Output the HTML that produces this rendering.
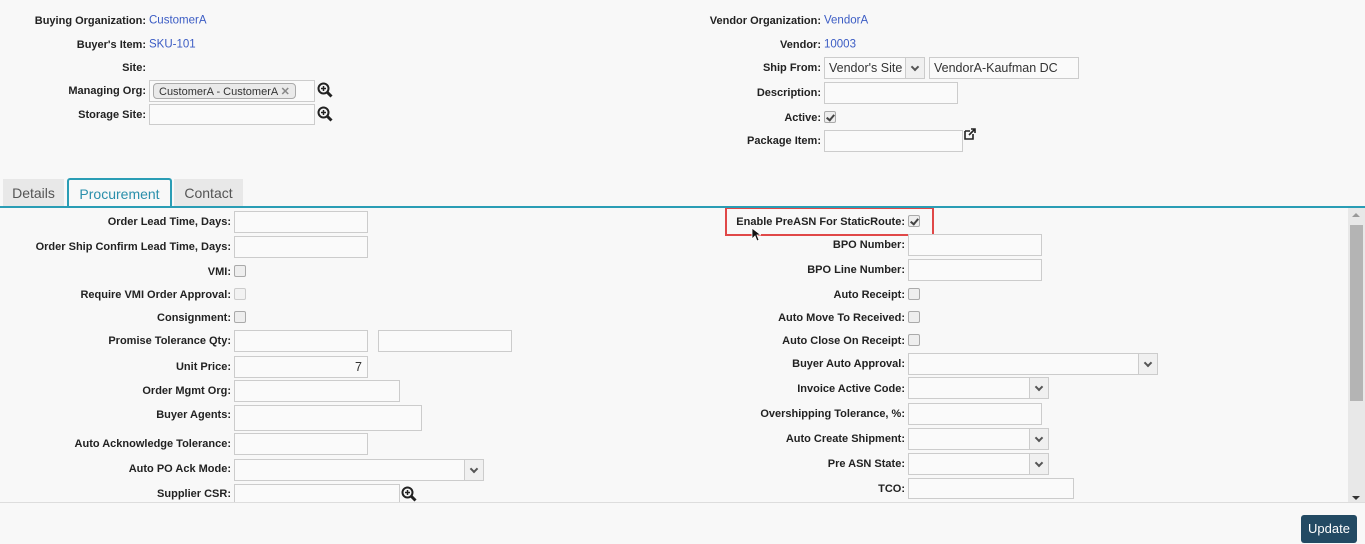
<!DOCTYPE html>
<html style="overflow:hidden"><head><meta charset="utf-8"><style>
*{box-sizing:border-box;margin:0;padding:0}
html,body{width:1365px;height:544px;overflow:hidden}
body{background:#f8f8f8;font-family:"Liberation Sans",sans-serif;position:relative;color:#222}
.l{position:absolute;font-size:11px;font-weight:bold;white-space:nowrap;transform:translateY(-42%);color:#222}
.v{position:absolute;font-size:11.5px;color:#3b5cc4;transform:translateY(-45%);white-space:nowrap}
.i{position:absolute;border:1px solid #ccc;background:#fafafa}
.cb{position:absolute;width:12px;height:12px;border:1px solid #aaa;border-radius:2px;background:#eee}
.ck::after{content:"";position:absolute;left:3px;top:1px;width:3px;height:6px;border:solid #444;border-width:0 2px 2px 0;transform:rotate(40deg)}
.sel{position:absolute;border:1px solid #ccc;background:#fafafa}
.sel::after{content:"";position:absolute;right:0;top:0;bottom:0;width:18px;border-left:1px solid #ccc;background:#f0f0f0}
.sel span{position:absolute;right:6px;top:50%;margin-top:-4px;width:6px;height:6px;border:solid #555;border-width:0 2px 2px 0;transform:rotate(45deg);z-index:1}
.tab{position:absolute;font-size:14px;color:#555;background:#e8e8e8;text-align:center;padding-top:6px}
.zm{position:absolute;width:16px;height:16px}
</style></head><body>
<div class="l" style="right:1219px;top:20px">Buying Organization:</div><div class="v" style="left:149px;top:20px">CustomerA</div>
<div class="l" style="right:1219px;top:44px">Buyer's Item:</div><div class="v" style="left:149px;top:44px">SKU-101</div>
<div class="l" style="right:1219px;top:67px">Site:</div>
<div class="l" style="right:1219px;top:90px">Managing Org:</div>
<div class="i" style="left:149px;top:80px;width:166px;height:22px"><div style="position:absolute;left:3px;top:2px;height:16px;border:1px solid #aaa;border-radius:4px;background:#eaeaea;font-size:11px;padding:1px 5px;color:#333;white-space:nowrap">CustomerA - CustomerA <span style="color:#888;font-weight:bold">✕</span></div></div>
<div class="l" style="right:1219px;top:114px">Storage Site:</div>
<div class="i" style="left:149px;top:104px;width:166px;height:21px"></div>
<svg class="zm" style="left:317px;top:82px" viewBox="0 0 16 16"><circle cx="6.5" cy="6.5" r="5" fill="none" stroke="#222" stroke-width="2"/><path d="M10 10l4.5 4.5" stroke="#222" stroke-width="3"/><path d="M4 6.5h5M6.5 4v5" stroke="#222" stroke-width="1.5"/></svg>
<svg class="zm" style="left:317px;top:106px" viewBox="0 0 16 16"><circle cx="6.5" cy="6.5" r="5" fill="none" stroke="#222" stroke-width="2"/><path d="M10 10l4.5 4.5" stroke="#222" stroke-width="3"/><path d="M4 6.5h5M6.5 4v5" stroke="#222" stroke-width="1.5"/></svg>
<div class="l" style="right:544px;top:20px">Vendor Organization:</div><div class="v" style="left:824px;top:20px">VendorA</div>
<div class="l" style="right:544px;top:44px">Vendor:</div><div class="v" style="left:824px;top:44px">10003</div>
<div class="l" style="right:544px;top:67px">Ship From:</div>
<div class="sel" style="left:824px;top:57px;width:101px;height:22px"><span></span><div style="position:absolute;left:4px;top:3px;font-size:12.5px;color:#333">Vendor's Site</div></div>
<div class="i" style="left:929px;top:57px;width:150px;height:22px;font-size:12.5px;padding:3px 4px;color:#333">VendorA-Kaufman DC</div>
<div class="l" style="right:544px;top:92px">Description:</div>
<div class="i" style="left:824px;top:82px;width:134px;height:22px"></div>
<div class="l" style="right:544px;top:117px">Active:</div>
<div class="cb ck" style="left:824px;top:111px"></div>
<div class="l" style="right:544px;top:140px">Package Item:</div>
<div class="i" style="left:824px;top:130px;width:139px;height:22px"></div>
<svg style="position:absolute;left:963px;top:128px" width="13" height="13" viewBox="0 0 13 13"><path d="M2 3h5M2 3v8h8V6" fill="none" stroke="#222" stroke-width="1.6"/><path d="M6 7l6-6M8 1h4v4" fill="none" stroke="#222" stroke-width="1.6"/></svg>
<div class="tab" style="left:3px;top:179px;width:61px;height:28px">Details</div>
<div class="tab" style="left:67px;top:178px;width:105px;height:30px;background:#f8f8f8;border:2px solid #2a9db5;border-bottom:none;border-radius:3px 3px 0 0;color:#2a8fab">Procurement</div>
<div class="tab" style="left:174px;top:179px;width:69px;height:28px">Contact</div>
<div style="position:absolute;left:0;top:206px;width:1365px;height:2px;background:#2a9db5"></div>
<div style="position:absolute;left:0;top:208px;width:1348px;height:294px;overflow:hidden">
<div style="position:absolute;left:0;top:-208px;width:1348px;height:502px">
<div class="l" style="right:1117px;top:221px">Order Lead Time, Days:</div><div class="i" style="left:234px;top:211px;width:134px;height:22px"></div>
<div class="l" style="right:1117px;top:246px">Order Ship Confirm Lead Time, Days:</div><div class="i" style="left:234px;top:236px;width:134px;height:22px"></div>
<div class="l" style="right:1117px;top:271px">VMI:</div><div class="cb" style="left:234px;top:265px"></div>
<div class="l" style="right:1117px;top:294px">Require VMI Order Approval:</div><div class="cb" style="left:234px;top:288px;border-color:#ccc;background:#f2f2f2"></div>
<div class="l" style="right:1117px;top:317px">Consignment:</div><div class="cb" style="left:234px;top:311px"></div>
<div class="l" style="right:1117px;top:340px">Promise Tolerance Qty:</div><div class="i" style="left:234px;top:330px;width:134px;height:22px"></div><div class="i" style="left:378px;top:330px;width:134px;height:22px"></div>
<div class="l" style="right:1117px;top:366px">Unit Price:</div><div class="i" style="left:234px;top:356px;width:134px;height:22px;font-size:12.5px;text-align:right;padding:3px 5px;color:#333">7</div>
<div class="l" style="right:1117px;top:390px">Order Mgmt Org:</div><div class="i" style="left:234px;top:380px;width:166px;height:22px"></div>
<div class="l" style="right:1117px;top:414px">Buyer Agents:</div><div class="i" style="left:234px;top:405px;width:188px;height:26px"></div>
<div class="l" style="right:1117px;top:443px">Auto Acknowledge Tolerance:</div><div class="i" style="left:234px;top:433px;width:134px;height:22px"></div>
<div class="l" style="right:1117px;top:468px">Auto PO Ack Mode:</div><div class="sel" style="left:234px;top:459px;width:250px;height:22px"><span></span></div>
<div class="l" style="right:1117px;top:493px">Supplier CSR:</div><div class="i" style="left:234px;top:484px;width:166px;height:22px"></div>
<svg class="zm" style="left:401px;top:486px" viewBox="0 0 16 16"><circle cx="6.5" cy="6.5" r="5" fill="none" stroke="#222" stroke-width="2"/><path d="M10 10l4.5 4.5" stroke="#222" stroke-width="3"/><path d="M4 6.5h5M6.5 4v5" stroke="#222" stroke-width="1.5"/></svg>
<div style="position:absolute;left:725px;top:207px;width:209px;height:29px;border:2px solid #e04848"></div>
<div class="l" style="right:443px;top:221px">Enable PreASN For StaticRoute:</div><div class="cb ck" style="left:908px;top:215px"></div>
<svg style="position:absolute;left:751px;top:227px" width="10" height="15" viewBox="0 0 10 15"><path d="M1 1v11l3-3 2 5 2-1-2-5h4z" fill="#111" stroke="#fff" stroke-width="0.8"/></svg>
<div class="l" style="right:443px;top:244px">BPO Number:</div><div class="i" style="left:908px;top:234px;width:134px;height:22px"></div>
<div class="l" style="right:443px;top:269px">BPO Line Number:</div><div class="i" style="left:908px;top:259px;width:134px;height:22px"></div>
<div class="l" style="right:443px;top:294px">Auto Receipt:</div><div class="cb" style="left:908px;top:288px"></div>
<div class="l" style="right:443px;top:317px">Auto Move To Received:</div><div class="cb" style="left:908px;top:311px"></div>
<div class="l" style="right:443px;top:340px">Auto Close On Receipt:</div><div class="cb" style="left:908px;top:334px"></div>
<div class="l" style="right:443px;top:363px">Buyer Auto Approval:</div><div class="sel" style="left:908px;top:353px;width:250px;height:22px"><span></span></div>
<div class="l" style="right:443px;top:388px">Invoice Active Code:</div><div class="sel" style="left:908px;top:377px;width:141px;height:22px"><span></span></div>
<div class="l" style="right:443px;top:413px">Overshipping Tolerance, %:</div><div class="i" style="left:908px;top:403px;width:134px;height:22px"></div>
<div class="l" style="right:443px;top:438px">Auto Create Shipment:</div><div class="sel" style="left:908px;top:428px;width:141px;height:22px"><span></span></div>
<div class="l" style="right:443px;top:463px">Pre ASN State:</div><div class="sel" style="left:908px;top:453px;width:141px;height:22px"><span></span></div>
<div class="l" style="right:443px;top:488px">TCO:</div><div class="i" style="left:908px;top:478px;width:166px;height:21px"></div>
</div></div>
<div style="position:absolute;left:1348px;top:208px;width:17px;height:294px;background:#e8e8e8"></div>
<div style="position:absolute;left:1350px;top:225px;width:13px;height:176px;background:#b4b4b4"></div>
<div style="position:absolute;left:1352px;top:213px;width:0;height:0;border:4px solid transparent;border-bottom:4px solid #999;border-top:none"></div>
<div style="position:absolute;left:1352px;top:496px;width:0;height:0;border:4px solid transparent;border-top:4px solid #333;border-bottom:none"></div>
<div style="position:absolute;left:0;top:502px;width:1365px;height:1px;background:#ddd"></div>
<div style="position:absolute;left:1301px;top:515px;width:56px;height:28px;background:#234a63;border-radius:3px;color:#fff;font-size:13px;text-align:center;line-height:28px">Update</div>
</body></html>
